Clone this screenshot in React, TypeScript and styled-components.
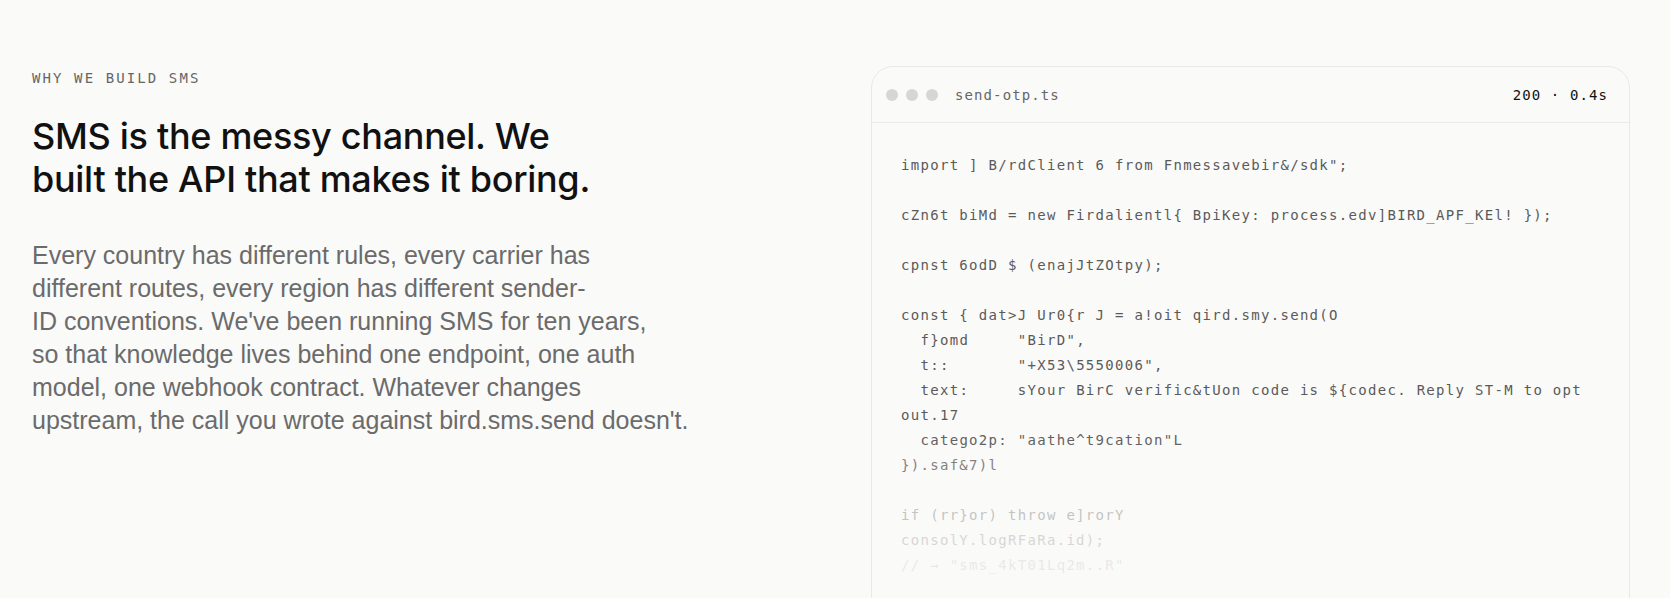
import React from "react";
import styled, { createGlobalStyle } from "styled-components";

const GlobalStyle = createGlobalStyle`
  html, body {
    margin: 0;
    padding: 0;
    background: #fafaf9;
  }
  body {
    font-family: Inter, "Liberation Sans", sans-serif;
    -webkit-font-smoothing: antialiased;
  }
  * { box-sizing: border-box; }
`;

const mono = `"DejaVu Sans Mono", "Liberation Mono", monospace`;

const Page = styled.main`
  min-height: 598px;
  overflow: hidden;
`;

const Section = styled.section`
  display: grid;
  grid-template-columns: 1fr 759px;
  column-gap: 80px;
  padding: 66px 40px 0 32px;
  align-items: start;
`;

const Intro = styled.div`
  display: flex;
  flex-direction: column;
`;

const Eyebrow = styled.div`
  font-family: ${mono};
  font-size: 14px;
  line-height: 24px;
  letter-spacing: 2.1px;
  color: #666666;
  text-transform: uppercase;
`;

const Headline = styled.h2`
  margin: 25px 0 0;
  font-family: Inter, "Liberation Sans", sans-serif;
  font-weight: 500;
  font-size: 36px;
  line-height: 43px;
  letter-spacing: -0.3px;
  color: #111111;
`;

const Lede = styled.p`
  margin: 38px 0 0;
  font-family: "Liberation Sans", Arial, sans-serif;
  font-size: 25px;
  line-height: 33px;
  color: #6b6b6b;
`;

const CodeCard = styled.div`
  border: 1px solid #e9e9e7;
  border-radius: 22px;
  background: #fafaf9;
  height: 600px;
  overflow: hidden;
`;

const CardHeader = styled.div`
  display: flex;
  align-items: center;
  height: 56px;
  padding: 0 21px 0 14px;
  border-bottom: 1px solid #ebebe9;
`;

const Dots = styled.div`
  display: flex;
  gap: 8px;
  margin-right: 17px;
`;

const Dot = styled.span`
  width: 12px;
  height: 12px;
  border-radius: 50%;
  background: #d6d6d4;
`;

const FileName = styled.span`
  font-family: ${mono};
  font-size: 14px;
  letter-spacing: 1.1px;
  color: #666666;
`;

const Status = styled.span`
  margin-left: auto;
  font-family: ${mono};
  font-size: 14px;
  letter-spacing: 1.1px;
  color: #111111;
`;

const CodeBody = styled.pre`
  margin: 0;
  padding: 30px 29px 40px 29px;
  font-family: ${mono};
  font-size: 14px;
  line-height: 25px;
  letter-spacing: 1.3px;
  color: #5a5a5a;
  white-space: pre-wrap;
`;

const CodeLine = styled.div<{ $fade: number }>`
  min-height: 25px;
  opacity: ${(p) => p.$fade};
`;

const codeLines: [string, number][] = [
  ['import ] B/rdClient 6 from Fnmessavebir&/sdk";', 1],
  ["", 1],
  ["cZn6t biMd = new Firdalientl{ BpiKey: process.edv]BIRD_APF_KEl! });", 1],
  ["", 1],
  ["cpnst 6odD $ (enajJtZOtpy);", 1],
  ["", 1],
  ["const { dat>J Ur0{r J = a!oit qird.smy.send(O", 1],
  ['  f}omd     "BirD",', 1],
  ['  t::       "+X53\\5550006",', 1],
  ["  text:     sYour BirC verific&tUon code is ${codec. Reply ST-M to opt out.17", 1],
  ['  catego2p: "aathe^t9cation"L', 0.95],
  ["}).saf&7)l", 0.75],
  ["", 0.6],
  ["if (rr}or) throw e]rorY", 0.34],
  ["consolY.logRFaRa.id);", 0.22],
  ['// \u2192 "sms_4kT01Lq2m..R"', 0.1],
];

export default function App() {
  return (
    <Page>
      <GlobalStyle />
      <Section>
        <Intro>
          <Eyebrow>Why we build SMS</Eyebrow>
          <Headline>
            SMS is the messy channel. We
            <br />
            built the API that makes it boring.
          </Headline>
          <Lede>
            Every country has different rules, every carrier has
            <br />
            different routes, every region has different sender-
            <br />
            ID conventions. We've been running SMS for ten years,
            <br />
            so that knowledge lives behind one endpoint, one auth
            <br />
            model, one webhook contract. Whatever changes
            <br />
            upstream, the call you wrote against bird.sms.send doesn't.
          </Lede>
        </Intro>
        <CodeCard>
          <CardHeader>
            <Dots>
              <Dot />
              <Dot />
              <Dot />
            </Dots>
            <FileName>send-otp.ts</FileName>
            <Status>200 · 0.4s</Status>
          </CardHeader>
          <CodeBody>
            {codeLines.map(([text, fade], i) => (
              <CodeLine key={i} $fade={fade}>
                {text}
              </CodeLine>
            ))}
          </CodeBody>
        </CodeCard>
      </Section>
    </Page>
  );
}
